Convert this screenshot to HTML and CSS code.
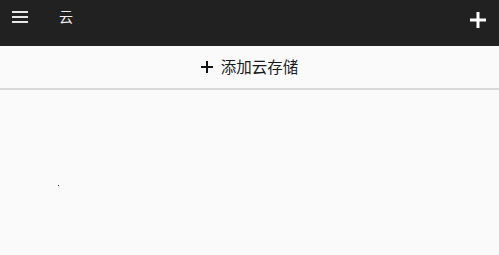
FILE: index.html
```html
<!DOCTYPE html>
<html lang="zh">
<head>
<meta charset="utf-8">
<link rel="stylesheet" href="styles.css">
</head>
<body>
<header class="toolbar">
  <span class="menu-icon"><i></i><i></i><i></i></span>
  <span class="title">云</span>
  <span class="spacer"></span>
  <svg class="add-icon" width="16" height="16" viewBox="0 0 16 16"><rect x="6.5" y="0" width="3" height="16" fill="#fff"/><rect x="0" y="6.5" width="16" height="3" fill="#fff"/></svg>
</header>
<div class="add-row">
  <svg class="row-plus" width="12" height="12" viewBox="0 0 12 12"><rect x="5" y="0" width="2" height="12" fill="#111"/><rect x="0" y="5" width="12" height="2" fill="#111"/></svg>
  <span class="row-text">添加云存储</span>
</div>
<main class="content"><span class="dot"></span></main>
</body>
</html>
```
FILE: styles.css
```css
html, body { margin: 0; padding: 0; }
body {
  width: 499px; height: 255px; overflow: hidden;
  background: #fafafa;
  font-family: "Noto Sans CJK SC", "Noto Sans", sans-serif;
}
.toolbar {
  height: 46px; background: #212121;
  display: flex; align-items: center;
  padding: 0 13px 0 12px; box-sizing: border-box;
}
.menu-icon {
  width: 16px; display: flex; flex-direction: column; gap: 3px;
  margin-top: -12px;
}
.menu-icon i { display: block; height: 2px; background: #e6e6e6; }
.title {
  color: #f2f2f2; font-size: 14px; margin-left: 31px; margin-top: -14px;
  line-height: 20px;
}
.spacer { flex: 1; }
.add-icon { display: block; margin-top: -6px; }
.add-row {
  height: 42px; border-bottom: 2px solid #d9d9d9;
  display: flex; align-items: center; justify-content: center;
  gap: 8px; padding-left: 0;
}
.row-plus { display: block; margin-top: 0; }
.row-text { font-size: 15.5px; color: #1a1a1a; line-height: 22px; margin-top: -2px; }
.content { position: relative; height: 165px; }
.dot {
  position: absolute; left: 58px; top: 95px;
  width: 1px; height: 1px; background: #333;
}
```
